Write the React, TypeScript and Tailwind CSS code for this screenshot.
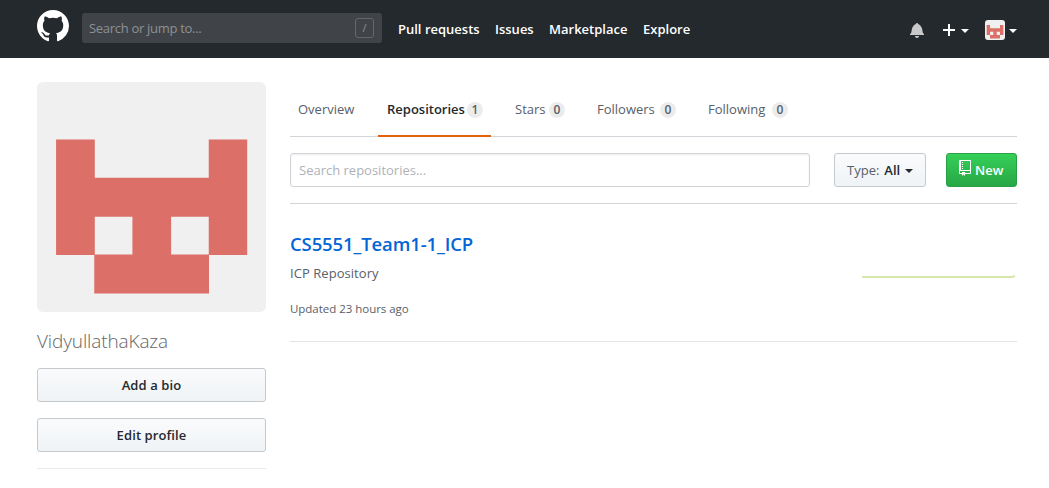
import type { ReactNode } from "react";

const MARK =
  "M8 0C3.58 0 0 3.58 0 8c0 3.54 2.29 6.53 5.47 7.59.4.07.55-.17.55-.38 0-.19-.01-.82-.01-1.49-2.01.37-2.53-.49-2.69-.94-.09-.23-.48-.94-.82-1.13-.28-.15-.68-.52-.01-.53.63-.01 1.08.58 1.23.82.72 1.21 1.87.87 2.33.66.07-.52.28-.87.51-1.07-1.78-.2-3.64-.89-3.64-3.95 0-.87.31-1.59.82-2.15-.08-.2-.36-1.02.08-2.12 0 0 .67-.21 2.2.82.64-.18 1.32-.27 2-.27.68 0 1.36.09 2 .27 1.53-1.04 2.2-.82 2.2-.82.44 1.1.16 1.92.08 2.12.51.56.82 1.27.82 2.15 0 3.07-1.87 3.75-3.65 3.95.29.25.54.73.54 1.48 0 1.07-.01 1.93-.01 2.2 0 .21.15.46.55.38A8.013 8.013 0 0 0 16 8c0-4.42-3.58-8-8-8z";
const BELL =
  "M14 12v1H0v-1l.73-.58c.77-.77.81-2.55 1.19-4.42C2.69 3.23 6 2 6 2c0-.55.45-1 1-1s1 .45 1 1c0 0 3.39 1.23 4.16 5 .38 1.88.42 3.66 1.19 4.42l.66.58H14zm-7 4c1.11 0 2-.89 2-2H5c0 1.11.89 2 2 2z";
const REPO =
  "M4 9H3V8h1v1zm0-3H3v1h1V6zm0-2H3v1h1V4zm0-2H3v1h1V2zm8-1v12c0 .55-.45 1-1 1H6v2l-1.5-1.5L3 16v-2H1c-.55 0-1-.45-1-1V1c0-.55.45-1 1-1h10c.55 0 1 .45 1 1zm-1 10H1v2h2v-1h3v1h5v-2zm0-10H2v9h9V1z";

function Identicon({ className }: { className: string }) {
  return (
    <svg viewBox="0 0 420 420" preserveAspectRatio="none" className={className}>
      <rect width="420" height="420" fill="#f0f0f0" />
      <path
        fill="#dc6f67"
        d="M35 105h71v70h209v-70h70.500v211h-70v70H105v-70H35zM106 246v69h69v-69zM246 246v69h69v-69z"
        fillRule="evenodd"
      />
    </svg>
  );
}

function Caret({ className = "" }: { className?: string }) {
  return (
    <span
      className={`inline-block h-0 w-0 border-x-4 border-t-4 border-x-transparent border-t-current ${className}`}
    />
  );
}

function Tab({ label, count, className, active }: { label: string; count?: number; className: string; active?: boolean }) {
  return (
    <a
      className={`flex h-[55px] items-center whitespace-nowrap border-b-2 px-2 pt-[2px] text-[13px] ${className} ${
        active
          ? "border-[#e36209] pl-[9px] font-semibold text-[#24292e]"
          : "border-transparent text-[#586069]"
      }`}
    >
      <span>{label}</span>
      {count !== undefined && (
        <span className="ml-auto flex h-4 min-w-4 items-center justify-center rounded-full bg-[#ececed] text-[12px] font-semibold leading-none text-[#586069]">
          {count}
        </span>
      )}
    </a>
  );
}

function SideButton({ children }: { children: ReactNode }) {
  return (
    <button className="h-[34px] w-full rounded-[3px] border border-[#c5c9cd] bg-linear-to-b from-[#fafbfc] to-[#eff3f6] pt-[2px] text-[13px] font-semibold tracking-[0.1px] text-[#24292e]">
      {children}
    </button>
  );
}

export default function App() {
  return (
    <div className="h-[488px] w-[1049px] overflow-hidden bg-white font-['Open_Sans',sans-serif] text-[#24292e]">
      <header className="flex h-[58px] items-start bg-[#24292e] pl-[37px] pr-8 text-white">
        <svg viewBox="0 0 16 16" className="mt-[10px] h-8 w-8 fill-white">
          <path d={MARK} />
        </svg>
        <div className="ml-[13px] mt-[13px] flex h-[30px] w-[300px] items-center justify-between rounded-[3px] bg-[#404448] pl-[7px] pr-2 text-[13px] text-[#8e9194]">
          <span className="pt-[2px] tracking-[-0.3px]">Search or jump to...</span>
          <span className="flex h-5 w-[19px] items-center justify-center rounded-[3px] border border-[#64686b] text-[11px]">
            /
          </span>
        </div>
        <nav className="ml-4 mt-[19px] flex whitespace-nowrap text-[13px] font-semibold leading-5">
          <a className="w-[97px]">Pull requests</a>
          <a className="w-[54px]">Issues</a>
          <a className="w-[94px]">Marketplace</a>
          <a>Explore</a>
        </nav>
        <div className="ml-auto mt-5 flex h-5 items-center">
          <svg viewBox="0 0 14 16" className="-mt-px h-4 w-[14px] fill-[#c8c9cb]">
            <path d={BELL} />
          </svg>
          <svg viewBox="0 0 12 16" className="ml-[19px] h-4 w-3 fill-white">
            <path d="M12 9H7v5H5V9H0V7h5V2h2v5h5z" />
          </svg>
          <Caret className="ml-[6px] mt-[2px]" />
          <Identicon className="ml-4 h-5 w-5 rounded-[3px]" />
          <Caret className="ml-1 mt-[2px]" />
        </div>
      </header>

      <div className="flex pl-[37px] pr-8 pt-6">
        <aside className="w-[229px]">
          <Identicon className="block h-[230px] w-[229px] rounded-md" />
          <h1 className="mt-4 h-6 text-[19px] font-light leading-[26px] tracking-[-0.12px] text-[#666]">
            VidyullathaKaza
          </h1>
          <div className="mt-4 flex flex-col gap-4">
            <SideButton>Add a bio</SideButton>
            <SideButton>Edit profile</SideButton>
            <hr className="border-[#e9ebee]" />
          </div>
        </aside>

        <main className="ml-6 w-[727px]">
          <nav className="flex gap-4 border-b border-[#d1d5da]">
            <Tab label="Overview" className="-mb-px w-[72px]" />
            <Tab label="Repositories" count={1} active className="-mb-px w-[113px]" />
            <Tab label="Stars" count={0} className="-mb-px w-[66px]" />
            <Tab label="Followers" count={0} className="-mb-px w-[95px]" />
            <Tab label="Following" count={0} className="-mb-px w-[96px]" />
          </nav>

          <div className="flex border-b border-[#d1d5da] py-4 text-[13px]">
            <div className="flex h-[34px] w-[520px] items-center rounded-[3px] border border-[#d1d5da] pl-2 pt-[2px] text-[#aeb2b7] shadow-[inset_0_1px_2px_rgba(27,31,35,0.075)]">
              Search repositories...
            </div>
            <button className="ml-6 flex h-[34px] w-[92px] items-center rounded-[3px] border border-[#c5c9cd] bg-linear-to-b from-[#fafbfc] to-[#eff3f6] pl-3 pt-[2px] font-semibold">
              <span className="font-normal text-[#586069]">Type:</span>
              <span className="ml-[5px]">All</span>
              <Caret className="ml-[5px]" />
            </button>
            <button className="ml-5 flex h-[34px] w-[71px] items-center rounded-[3px] border border-[#28a043] bg-linear-to-b from-[#34d058] to-[#28a745] pl-3 pt-[2px] font-semibold text-white">
              <svg viewBox="0 0 12 16" className="-mt-[6px] h-4 w-3 fill-white">
                <path d={REPO} />
              </svg>
              <span className="ml-1">New</span>
            </button>
          </div>

          <article className="flex h-[138px] justify-between border-b border-[#e1e4e8]">
            <div>
              <h3 className="mt-[26px] text-[18.5px] font-semibold leading-7 tracking-[-0.12px] text-[#0366d6]">
                CS5551_Team1-1_ICP
              </h3>
              <p className="mt-[5px] text-[13px] leading-5 tracking-[0.05px] text-[#586069]">ICP Repository</p>
              <p className="mt-4 text-[11.5px] leading-5 tracking-[-0.03px] text-[#586069]">Updated 23 hours ago</p>
            </div>
            <svg viewBox="0 0 155 30" className="mt-[57px] h-[30px] w-[155px]">
              <path d="M0 16H150L153 15" fill="none" stroke="#d6e8a8" strokeWidth="2" />
            </svg>
          </article>
        </main>
      </div>
    </div>
  );
}
